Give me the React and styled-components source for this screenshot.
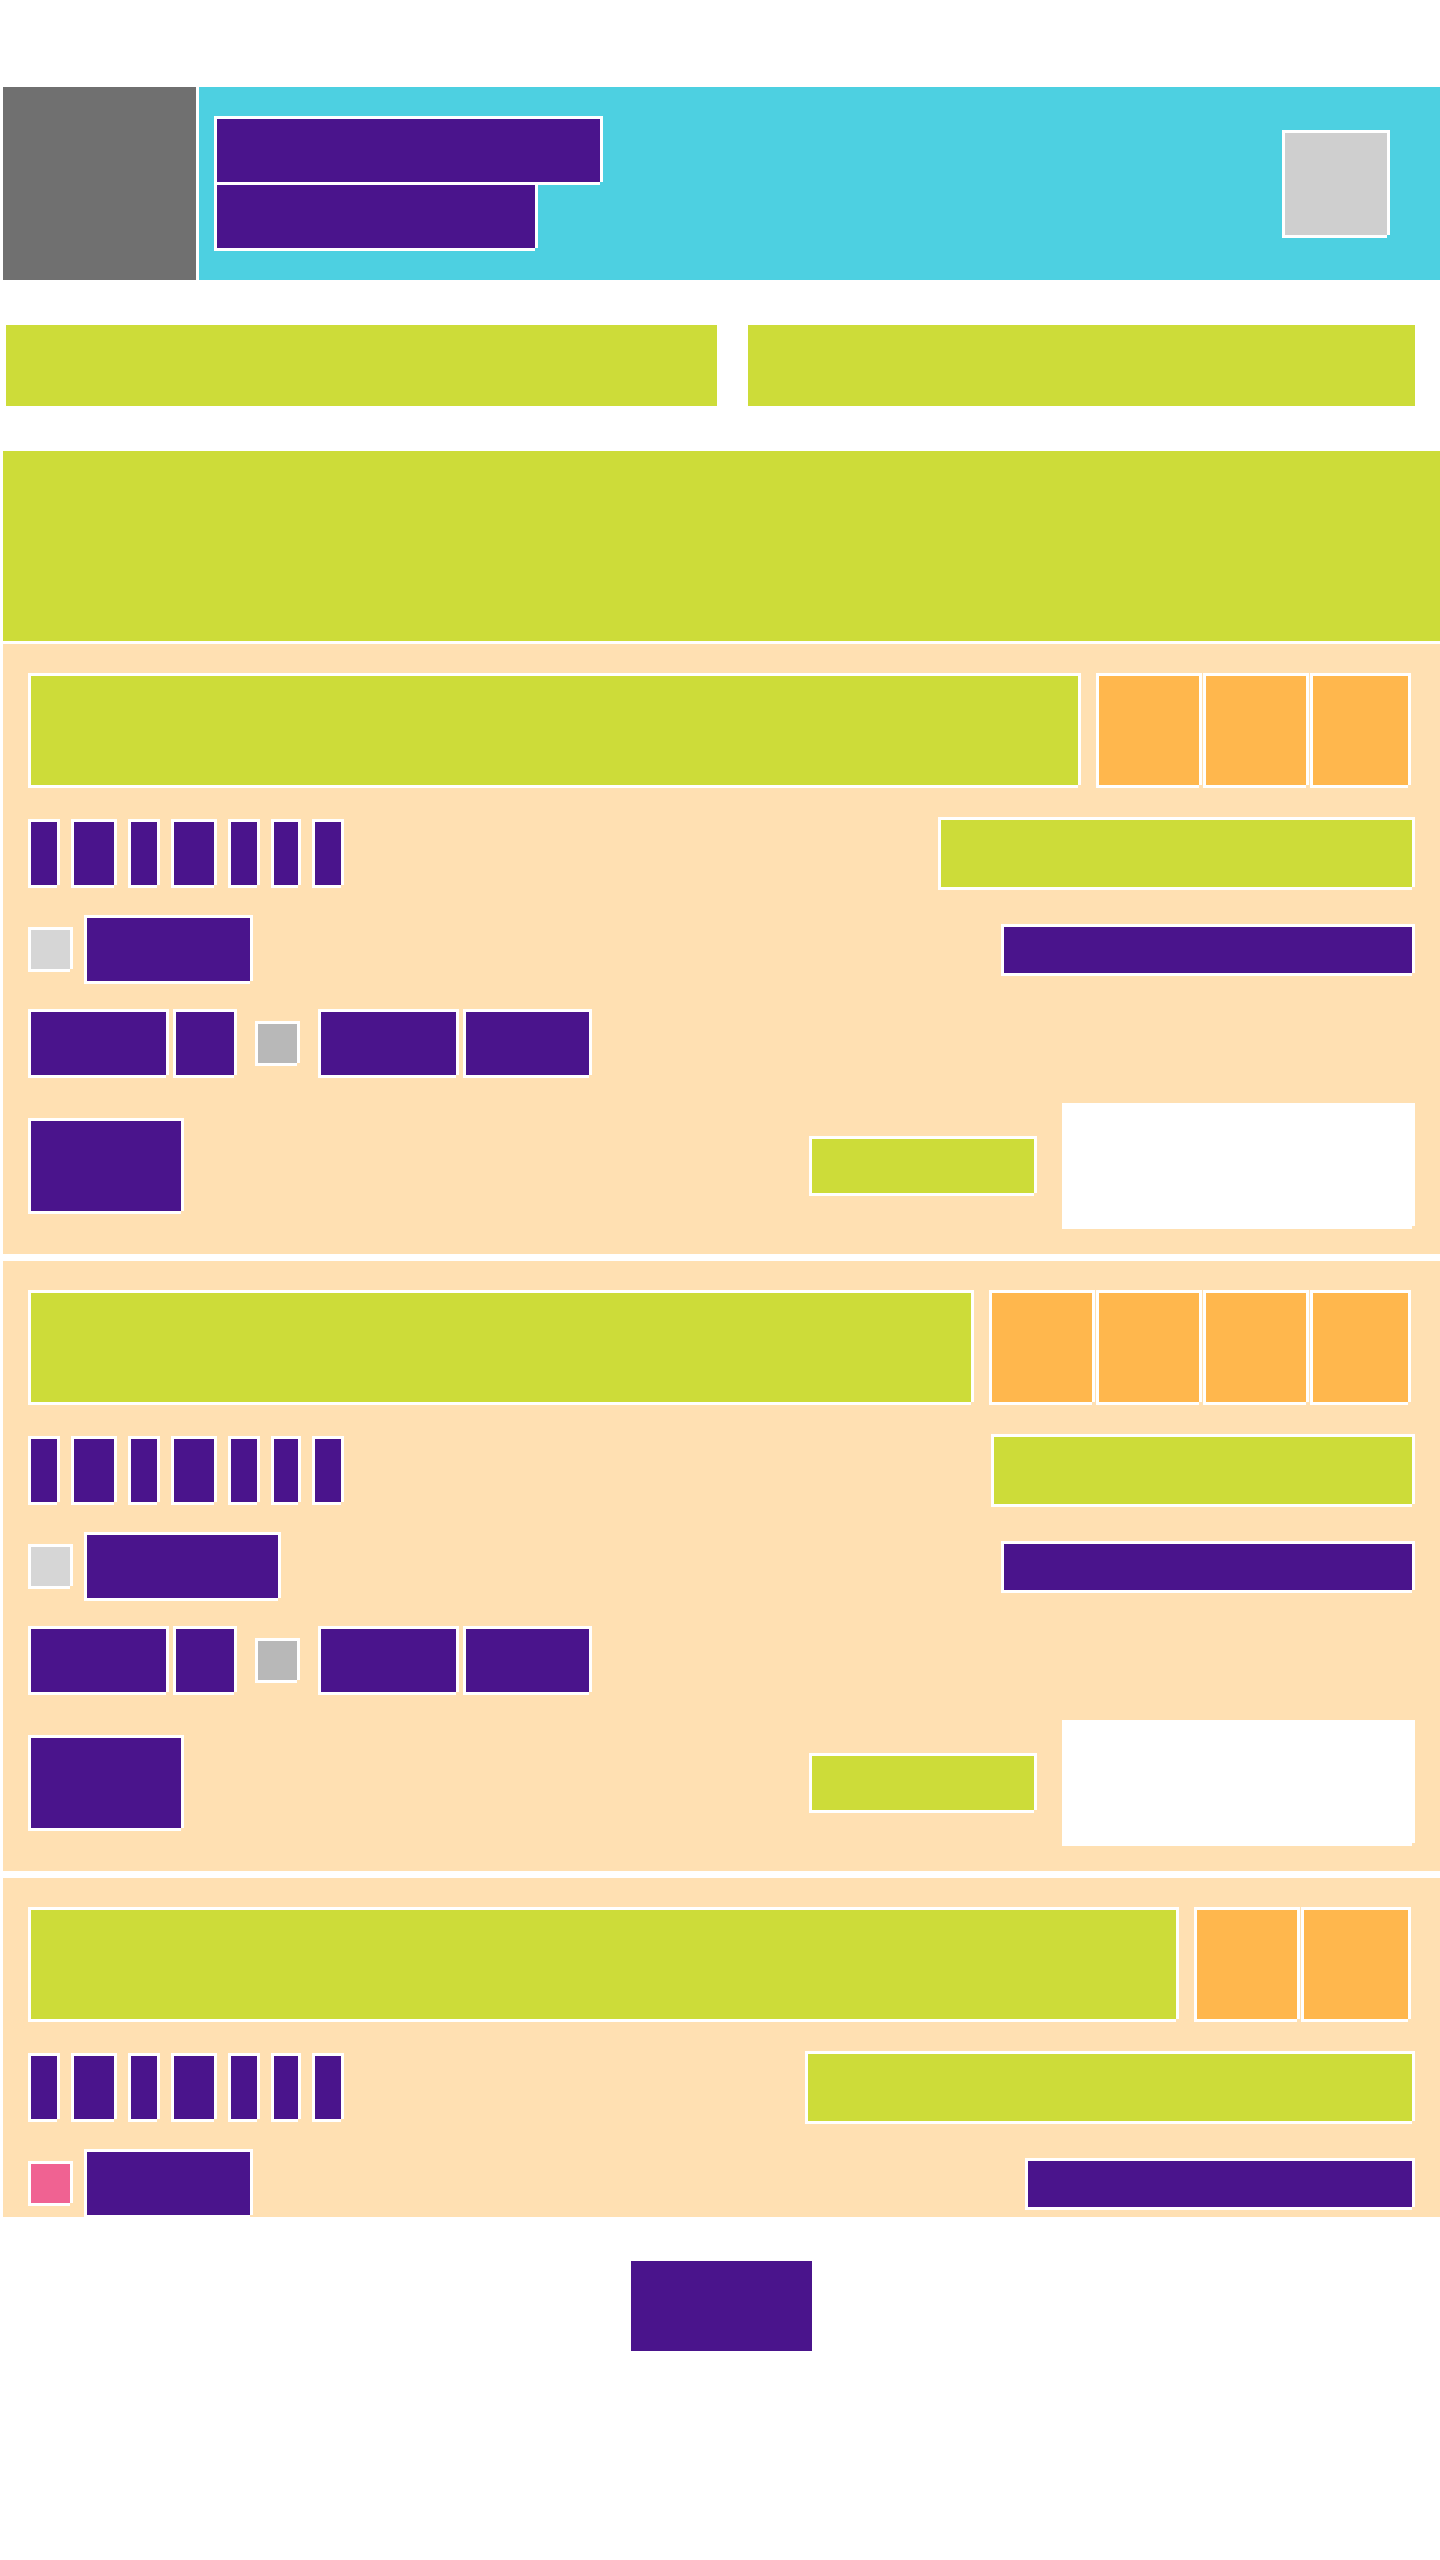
import styled, { createGlobalStyle, css } from "styled-components"

const GlobalStyle = createGlobalStyle`
    html, body {
        margin: 0;
        padding: 0;
        background: #ffffff;
        font-family: "Liberation Sans", Arial, sans-serif;
    }
`

// white frame drawn around the blocks, open at the bottom-right corner
const frame = css`
    box-shadow: -3px -3px 0 #fff, 3px -3px 0 #fff, -3px 3px 0 #fff, 3px 0 0 #fff, 0 3px 0 #fff;
`

const Page = styled.div `
    width: 1437px;
    margin-left: 3px;
    padding-top: 87px;
    padding-bottom: 200px;
`

const Header = styled.header `
    display: flex;
    height: 193px;
`
const Header__side = styled.div `
    width: 193px;
    background-color: #707070;
`
const Header__main = styled.div `
    flex: 1;
    margin-left: 3px;
    display: flex;
    align-items: center;
    justify-content: space-between;
    padding: 0 53px 0 18px;
    background-color: #4dd0e1;
`
const Header__titles = styled.div `
    display: flex;
    flex-direction: column;
    gap: 3px;
`
const HeadLine = styled.div `
    ${frame}
    width: ${p => p.$w}px;
    height: 63px;
    background-color: #4a148c;
`
const Avatar = styled.div `
    ${frame}
    width: 102px;
    height: 102px;
    background-color: #cfcfcf;
`

const Banner = styled.div `
    display: flex;
    gap: 31px;
    margin-top: 45px;
    padding-left: 3px;
`
const Banner__bar = styled.div `
    width: ${p => p.$w}px;
    height: 81px;
    background-color: #cddc39;
`
const Hero = styled.div `
    margin-top: 45px;
    height: 190px;
    background-color: #cddc39;
`

const Card = styled.section `
    display: flex;
    flex-direction: column;
    gap: 31px;
    margin-top: ${p => p.$first ? 3 : 7}px;
    padding: 32px 28px 28px 28px;
    background-color: #ffe0b2;
    ${p => p.$clip && css`
        height: 339px;
        box-sizing: border-box;
        overflow: hidden;
    `}
`
const Card__top = styled.div `
    display: flex;
    gap: 21px;
    padding-right: 4px;
    margin-bottom: 4px;
`
const Card__title = styled.div `
    ${frame}
    flex: 1;
    height: 109px;
    background-color: #cddc39;
`
const Thumbs = styled.div `
    display: flex;
    gap: 7px;
`
const Thumb = styled.div `
    ${frame}
    width: ${p => p.$w}px;
    height: 109px;
    background-color: #ffb74d;
`
const Card__row = styled.div `
    display: flex;
    align-items: center;
    justify-content: space-between;
`
const Group = styled.div `
    display: flex;
    align-items: center;
    gap: ${p => p.$gap}px;
`
const Tag = styled.div `
    ${frame}
    width: ${p => p.$w}px;
    height: 63px;
    background-color: #4a148c;
`
const Pill = styled.div `
    ${frame}
    width: ${p => p.$w}px;
    height: 67px;
    background-color: #cddc39;
`
const Check = styled.div `
    ${frame}
    width: 39px;
    height: 39px;
    flex-shrink: 0;
    background-color: ${p => p.$color};
`
const Label = styled.div `
    ${frame}
    width: ${p => p.$w}px;
    height: 63px;
    background-color: #4a148c;
`
const Field = styled.div `
    ${frame}
    width: ${p => p.$w}px;
    height: 46px;
    background-color: #4a148c;
`
const Meta = styled.div `
    display: flex;
    align-items: center;
`
const Chip = styled.div `
    ${frame}
    width: ${p => p.$w}px;
    height: 63px;
    margin-right: ${p => p.$gap}px;
    background-color: #4a148c;
`
const Dot = styled.div `
    ${frame}
    width: 39px;
    height: 39px;
    margin-right: 24px;
    background-color: #b8b8b8;
`
const Action = styled.div `
    ${frame}
    width: 150px;
    height: 90px;
    background-color: #4a148c;
`
const Price = styled.div `
    ${frame}
    width: 222px;
    height: 54px;
    background-color: #cddc39;
`
const Note = styled.div `
    ${frame}
    width: 347px;
    height: 120px;
    background-color: #ffffff;
`

const Footer = styled.div `
    display: flex;
    justify-content: center;
    margin-top: 44px;
`
const Button = styled.button `
    width: 181px;
    height: 90px;
    border: none;
    padding: 0;
    background-color: #4a148c;
`

const tags = [26, 40, 26, 40, 26, 24, 26]

const cards = [
    { thumbs: [100, 100, 95], pill: 471, label: 163, field: 408, check: "#d6d6d6" },
    { thumbs: [100, 100, 100, 95], pill: 418, label: 191, field: 408, check: "#d6d6d6" },
    { thumbs: [100, 104], pill: 604, label: 163, field: 384, check: "#f06292", clip: true },
]

function Listing ({ data, first }) {
    return (
        <Card $first={first} $clip={data.clip}>
            <Card__top>
                <Card__title />
                <Thumbs>
                    {data.thumbs.map((w, i) => <Thumb key={i} $w={w} />)}
                </Thumbs>
            </Card__top>
            <Card__row>
                <Group $gap={17}>
                    {tags.map((w, i) => <Tag key={i} $w={w} />)}
                </Group>
                <Pill $w={data.pill} />
            </Card__row>
            <Card__row>
                <Group $gap={17}>
                    <Check $color={data.check} />
                    <Label $w={data.label} />
                </Group>
                <Field $w={data.field} />
            </Card__row>
            <Card__row>
                <Meta>
                    <Chip $w={135} $gap={10} />
                    <Chip $w={58} $gap={24} />
                    <Dot />
                    <Chip $w={135} $gap={10} />
                    <Chip $w={123} $gap={0} />
                </Meta>
            </Card__row>
            <Card__row>
                <Action />
                <Group $gap={31}>
                    <Price />
                    <Note />
                </Group>
            </Card__row>
        </Card>
    )
}

export default function App () {
    return (
        <>
            <GlobalStyle />
            <Page>
                <Header>
                    <Header__side />
                    <Header__main>
                        <Header__titles>
                            <HeadLine $w={383} />
                            <HeadLine $w={318} />
                        </Header__titles>
                        <Avatar />
                    </Header__main>
                </Header>
                <Banner>
                    <Banner__bar $w={711} />
                    <Banner__bar $w={667} />
                </Banner>
                <Hero />
                {cards.map((c, i) => <Listing key={i} data={c} first={i === 0} />)}
                <Footer>
                    <Button />
                </Footer>
            </Page>
        </>
    )
}
